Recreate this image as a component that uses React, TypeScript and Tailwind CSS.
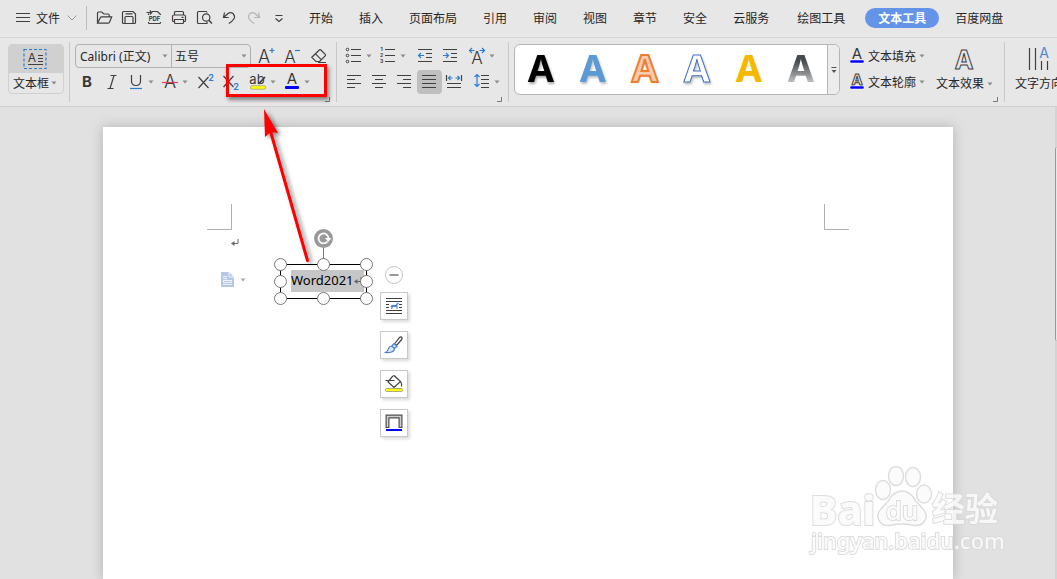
import { useState } from "react";
import type { ReactNode } from "react";

const UI = "font-['Noto_Sans','Noto_Sans_CJK_SC',sans-serif]";
const BLUE = "#2b7cd3";

function Icon({ children, w = 20, h = 20 }: { children: ReactNode; w?: number; h?: number }) {
  return (
    <svg
      width={w}
      height={h}
      viewBox={`0 0 ${w} ${h}`}
      fill="none"
      stroke="#404040"
      strokeWidth="1.2"
      className="shrink-0 overflow-visible"
      aria-hidden="true"
    >
      {children}
    </svg>
  );
}

function Letter({
  x,
  y,
  size = 18,
  weight = 300,
  children,
  fill = "#383838",
  outline = false,
}: {
  x: number;
  y: number;
  size?: number;
  weight?: number;
  children: string;
  fill?: string;
  outline?: boolean;
}) {
  return (
    <text
      x={x}
      y={y}
      fontSize={size}
      fontWeight={weight}
      fontFamily="Inter, Noto Sans, sans-serif"
      textAnchor="middle"
      fill={outline ? "none" : fill}
      stroke={outline ? "#404040" : "none"}
      strokeWidth="1"
    >
      {children}
    </text>
  );
}

function Caret({ light = false }: { light?: boolean }) {
  return (
    <svg width="6" height="4" viewBox="0 0 6 4" className="shrink-0" aria-hidden="true">
      <path d="M0.5 0.5h5L3 3.500z" fill={light ? "#aaa" : "#8a8a8a"} />
    </svg>
  );
}

function Tool({ label, active, children }: { label: string; active?: boolean; children: ReactNode }) {
  return (
    <button
      type="button"
      aria-label={label}
      className={`flex h-6 w-[25px] shrink-0 items-center rounded pl-0.5 ${active ? "bg-[#bfbfbf]" : ""}`}
    >
      <Icon>{children}</Icon>
    </button>
  );
}

function DropTool({ label, children }: { label: string; children: ReactNode }) {
  return (
    <button type="button" aria-label={label} className="flex h-6 w-[34px] shrink-0 items-center gap-0.5 pl-px">
      <Icon>{children}</Icon>
      <Caret />
    </button>
  );
}

function Divider() {
  return <div className="my-1 w-px shrink-0 bg-[#c8c8c8]" />;
}

function Launcher() {
  return (
    <button type="button" aria-label="更多设置" className="absolute right-1.5 bottom-1">
      <svg width="5" height="5" viewBox="0 0 5 5" aria-hidden="true">
        <path d="M4.500 0v4.500H0" fill="none" stroke="#777" />
      </svg>
    </button>
  );
}

const mainTabs = ["开始", "插入", "页面布局", "引用", "审阅", "视图", "章节", "安全", "云服务"];

function TopBar() {
  const [tab, setTab] = useState("文本工具");
  const cls = (t: string) =>
    `h-5 shrink-0 rounded-full px-[13px] pt-0.5 whitespace-nowrap ${t === tab ? "bg-[#6394e8] font-bold text-white" : ""}`;
  const render = (t: string) => (
    <button key={t} type="button" onClick={() => setTab(t)} className={cls(t)}>
      {t}
    </button>
  );
  return (
    <header className="flex h-[38px] items-start overflow-hidden border-b border-[#d4d4d4] text-xs text-[#262626]">
      <button type="button" className="flex h-9 w-[86px] shrink-0 items-center pl-[13px]">
        <Icon>
          <path d="M3 5.500h14M3 9.500h14M3 13.500h14" />
        </Icon>
        <span className="ml-[3px] shrink-0 pt-0.5">文件</span>
        <svg width="10" height="6" viewBox="0 0 10 6" className="ml-[7px]" fill="none" stroke="#999" aria-hidden="true">
          <path d="M0.500 0.500L5 5l4.500-4.500" />
        </svg>
      </button>
      <div className="mt-1.5 h-6 w-px shrink-0 bg-[#bdbdbd]" />
      <div className="ml-[5px] flex h-9 items-center">
        <Tool label="打开">
          <path d="M3.500 15V5q0-1 1-1h3.300l2 2H14q1.200 0 1.200 1.200V9M3.500 15.200l2.800-5.400q.4-.9 1.300-.9h10.100l-2.300 5.500q-.4.8-1.300.8z" />
        </Tool>
        <Tool label="保存">
          <path d="M4.500 3.500h9.500l2.500 2.500v8.500q0 1-1 1h-11q-1 0-1-1v-10q0-1 1-1zM6 15.500V9.500q0-1 1-1h6q1 0 1 1v6M6.500 5.800h7" />
        </Tool>
        <Tool label="输出为PDF">
          <path d="M4.500 7V5.500M8 3.500h5.500l3 3V7M4.500 14v.5q0 1 1 1h10q1 0 1-1V14M2.500 4.500h5M5.800 2.500l2 2-2 2" />
          <Letter x={10.5} y={13} size={6} weight={700}>
            PDF
          </Letter>
        </Tool>
        <Tool label="打印">
          <path d="M5.500 7V4.500q0-1 1-1h7q1 0 1 1V7M5.500 13.500h-1q-1 0-1-1v-4q0-1.500 1.500-1.500h10q1.500 0 1.500 1.500v4q0 1-1 1h-1M5.500 11.500h9v3q0 1-1 1h-7q-1 0-1-1zM12.500 9.300h2" />
        </Tool>
        <Tool label="打印预览">
          <path d="M10 15.500H4.500q-1 0-1-1v-10q0-1 1-1H12q1 0 1 1M13 14v1.500h-3" />
          <circle cx="12.200" cy="9.500" r="3.700" />
          <path d="M14.900 12.200l3 3.300" strokeWidth="1.500" />
        </Tool>
        <Tool label="撤销">
          <path d="M5.500 4.500l-1 5h5.200M4.800 9.300L9 5.500q2.800-2 5.300.3 2.200 2.700.5 5.200-1.500 2.500-5 4.500" />
        </Tool>
        <Tool label="恢复">
          <path
            stroke="#b5b5b5"
            d="M14.500 4.500l1 5h-5.200M15.200 9.300L11 5.500q-2.800-2-5.300.3-2.200 2.700-.5 5.200 1.500 2.500 5 4.500"
          />
        </Tool>
        <Tool label="自定义快速访问工具栏">
          <path d="M6.500 7.500h7M6.500 10.500l3.500 3 3.500-3" />
        </Tool>
      </div>
      <nav className="ml-1 flex h-9 items-center">
        {mainTabs.map(render)}
        <div className="ml-0.5 flex gap-[7px]">
          {render("绘图工具")}
          {render("文本工具")}
        </div>
        <div className="ml-[3px] flex">{render("百度网盘")}</div>
      </nav>
    </header>
  );
}

function Combo({ label, value, options, className }: { label: string; value: string; options: string[]; className: string }) {
  return (
    <label className={`flex items-center pr-[3px] ${className}`}>
      <span className="sr-only">{label}</span>
      <select
        defaultValue={value}
        className="h-full min-w-0 flex-1 appearance-none bg-transparent pt-0.5 leading-5 outline-none"
      >
        {options.map((o) => (
          <option key={o}>{o}</option>
        ))}
      </select>
      <Caret />
    </label>
  );
}

const presets = [
  { name: "黑色", cls: "text-black drop-shadow-[1px_2px_1px_rgba(0,0,0,0.35)]" },
  { name: "蓝色", cls: "text-[#5b9bd5] drop-shadow-[1px_2px_1px_rgba(0,0,0,0.25)]" },
  { name: "橙色", cls: "text-[#f8cbad] [-webkit-text-stroke:2px_#ed7d31]" },
  { name: "蓝色轮廓", cls: "text-white [-webkit-text-stroke:1px_#4472c4] drop-shadow-[1px_2px_1px_rgba(0,0,0,0.25)]" },
  { name: "金色", cls: "text-[#f5b800]" },
  { name: "灰色渐变", cls: "bg-linear-to-b from-[#45484c] from-35% to-[#b8babd] to-80% bg-clip-text text-transparent" },
];

const alignLines = {
  left: "M3 3.500h14M3 7.500h8M3 11.500h14M3 15.500h8",
  center: "M3 3.500h14M6 7.500h8M3 11.500h14M6 15.500h8",
  right: "M3 3.500h14M9 7.500h8M3 11.500h14M9 15.500h8",
  justify: "M3 3.500h14M3 7.500h14M3 11.500h14M3 15.500h14",
};

function Ribbon() {
  return (
    <section className="flex h-[69px] overflow-hidden border-b border-[#d0d0d0] text-xs text-[#262626]">
      <div className="flex shrink-0 items-start pt-1.5 pr-[5px] pl-2">
        <button type="button" className="w-14 overflow-hidden rounded border border-[#d0d0d0]">
          <span className="flex h-7 items-center justify-center bg-[#d0d0d0] pr-0.5">
            <Icon w={24} h={20}>
              <rect x="1" y="0.500" width="22" height="19" stroke={BLUE} strokeDasharray="3 2" />
              <Letter x={9} y={13} size={12} weight={400}>
                A
              </Letter>
              <path d="M15 6.500h5M15 9.500h5M15 12.500h5M5 15.500h15" strokeWidth="1" />
            </Icon>
          </span>
          <span className="flex h-5 items-center gap-0.5 pl-1">
            <span className="pt-0.5 whitespace-nowrap">文本框</span>
            <Caret />
          </span>
        </button>
      </div>
      <Divider />
      <div className="relative flex w-[266px] shrink-0 flex-col gap-0.5 pt-1.5 pl-[5px]">
        <div className="flex h-6 items-center">
          <div className="flex h-6 w-44 rounded border border-[#b0b0b0]">
            <Combo
              label="字体"
              value="Calibri (正文)"
              options={["Calibri (正文)", "宋体", "黑体"]}
              className="w-[96px] border-r border-[#b0b0b0] pl-1"
            />
            <Combo label="字号" value="五号" options={["五号", "四号", "小四"]} className="flex-1 pl-[3px]" />
          </div>
          <div className="ml-px flex gap-0.5">
            <Tool label="增大字号">
              <Letter x={10} y={17} size={18}>A</Letter>
              <path d="M15.500 4.500h5M18 2v5" stroke={BLUE} />
            </Tool>
            <Tool label="减小字号">
              <Letter x={9} y={17} size={17}>A</Letter>
              <path d="M14 4.500h5" stroke={BLUE} />
            </Tool>
            <Tool label="清除格式">
              <path d="M3.800 11.300l7.500-7.300q.8-.7 1.600 0l4.300 4.300q.8.8 0 1.600L11.500 15.500q-.7.8-1.500 0H8zM7.500 7.800l6 6M10 16.500h8" />
            </Tool>
          </div>
        </div>
        <div className="flex h-6">
          <Tool label="加粗">
            <Letter x={10} y={15} size={15} weight={700}>B</Letter>
          </Tool>
          <Tool label="倾斜">
            <path d="M8.500 3.500h6M5.500 16.500h6M12 3.500l-4 13" />
          </Tool>
          <DropTool label="下划线">
            <path d="M5.500 3v6q0 4.500 4.500 4.500t4.500-4.500V3" />
            <path d="M4 16.500h12" stroke={BLUE} />
          </DropTool>
          <DropTool label="删除线">
            <Letter x={10} y={16} size={18}>A</Letter>
            <path d="M2 10.500h16" stroke="#e04050" />
          </DropTool>
          <Tool label="上标">
            <path d="M3.500 5l10 11M13.500 5l-10 11" />
            <Letter x={16} y={9} size={9} weight={600} fill={BLUE}>2</Letter>
          </Tool>
          <Tool label="下标">
            <path d="M3.500 4l10 11M13.500 4l-10 11" />
            <Letter x={16} y={18} size={9} weight={600} fill={BLUE}>2</Letter>
          </Tool>
          <div className="ml-1 flex">
            <DropTool label="突出显示">
              <Letter x={9} y={12} size={13} weight={400}>ab</Letter>
              <path d="M10.500 12l6.500-7" strokeWidth="1.800" />
              <rect x="2.500" y="13.700" width="15" height="3.500" rx="1.500" fill="#ffff00" stroke="#777" strokeWidth=".5" />
            </DropTool>
            <DropTool label="字体颜色">
              <Letter x={10} y={12} size={15} weight={400}>A</Letter>
              <rect x="3" y="14" width="14" height="3" rx="1" fill="#0000ff" stroke="none" />
            </DropTool>
          </div>
        </div>
        <Launcher />
      </div>
      <Divider />
      <div className="relative flex w-[171px] shrink-0 flex-col gap-0.5 pt-1.5 pl-[5px]">
        <div className="flex h-6 pl-px">
          <DropTool label="项目符号">
            <g strokeWidth="1">
              <circle cx="3.500" cy="3.500" r="1.300" />
              <circle cx="3.500" cy="9.500" r="1.300" />
              <circle cx="3.500" cy="15.500" r="1.300" />
            </g>
            <path d="M7 3.500h10M7 9.500h10M7 15.500h10" />
          </DropTool>
          <DropTool label="编号">
            <Letter x={3.5} y={5} size={5} weight={700}>1</Letter>
            <Letter x={3.5} y={11} size={5} weight={700}>2</Letter>
            <Letter x={3.5} y={17} size={5} weight={700}>3</Letter>
            <path d="M7 3.500h10M7 9.500h10M7 15.500h10" />
          </DropTool>
          <div className="ml-0.5 flex">
            <Tool label="减少缩进">
              <path d="M3 3.500h14M11 7.500h6M11 11.500h6M3 15.500h14" />
              <path d="M9 9.500H3.500M6 7L3.500 9.500 6 12" stroke={BLUE} />
            </Tool>
            <Tool label="增加缩进">
              <path d="M3 3.500h14M11 7.500h6M11 11.500h6M3 15.500h14" />
              <path d="M3 9.500h5.500M6 7l2.500 2.500L6 12" stroke={BLUE} />
            </Tool>
          </div>
          <div className="ml-[3px] flex">
            <DropTool label="字符缩放">
              <Letter x={10} y={18} size={17}>A</Letter>
              <path d="M2.500 4.500h5M5 2L2.500 4.500 5 7M12.500 4.500h5M15 2l2.500 2.500L15 7" stroke={BLUE} />
            </DropTool>
          </div>
        </div>
        <div className="flex h-6">
          <Tool label="左对齐"><path d={alignLines.left} /></Tool>
          <Tool label="居中对齐"><path d={alignLines.center} /></Tool>
          <Tool label="右对齐"><path d={alignLines.right} /></Tool>
          <Tool label="两端对齐" active><path d={alignLines.justify} /></Tool>
          <Tool label="分散对齐">
            <path d="M2.500 3v6M17.500 3v6M3 11.500h14M3 15.500h14" />
            <path d="M4.500 6h4M6.500 4l-2 2 2 2M11.500 6h4M13.500 4l2 2-2 2" stroke={BLUE} />
          </Tool>
          <div className="ml-1 flex">
            <DropTool label="行距">
              <path d="M9 3.500h8M9 7.500h8M9 11.500h8M9 15.500h8" />
              <path d="M5 3v11M2.500 5L5 2.500 7.500 5M2.500 12L5 14.500 7.500 12" stroke={BLUE} />
            </DropTool>
          </div>
        </div>
        <Launcher />
      </div>
      <Divider />
      <div className="relative flex w-[495px] shrink-0 items-start pt-1.5 pl-[5px]">
        <div className="flex h-[51px] shrink-0 rounded-md border border-[#b4b4b4] bg-white">
          {presets.map((p) => (
            <button
              key={p.name}
              type="button"
              aria-label={p.name}
              className="flex w-[52px] items-center justify-center pb-1 text-[38px] leading-[45px] font-bold"
            >
              <span className={p.cls}>A</span>
            </button>
          ))}
          <button
            type="button"
            aria-label="更多样式"
            className="flex w-3 items-center justify-center rounded-r-md border-l border-[#b4b4b4] bg-[#ececec]"
          >
            <svg width="6" height="6" viewBox="0 0 6 6" aria-hidden="true">
              <path d="M0.500 0h5v1h-5zM0.500 3h5L3 6z" fill="#555" />
            </svg>
          </button>
        </div>
        <div className="ml-[7px] flex shrink-0 flex-col gap-0.5">
          <button type="button" className="flex h-6 items-center">
            <Icon>
              <Letter x={10} y={13} size={15} weight={400}>A</Letter>
              <rect x="3" y="14" width="14" height="3" rx="1" fill="#0000ff" stroke="#fff" strokeWidth=".5" />
            </Icon>
            <span className="mr-[3px] ml-px pt-0.5">文本填充</span>
            <Caret />
          </button>
          <button type="button" className="flex h-6 items-center">
            <Icon>
              <Letter x={10} y={13} size={15} weight={700} outline>A</Letter>
              <rect x="3" y="14" width="14" height="3" rx="1" fill="#0000ff" stroke="#fff" strokeWidth=".5" />
            </Icon>
            <span className="mr-[3px] ml-px pt-0.5">文本轮廓</span>
            <Caret />
          </button>
        </div>
        <button type="button" className="ml-[11px] flex shrink-0 flex-col">
          <span className="flex h-[30px] w-14 items-center justify-center">
            <Icon w={22} h={22}>
              <Letter x={11} y={21} size={25} weight={700} outline>A</Letter>
            </Icon>
          </span>
          <span className="flex h-5 items-center gap-[3px]">
            文本效果
            <Caret />
          </span>
        </button>
        <Launcher />
      </div>
      <Divider />
      <button type="button" className="ml-2.5 flex shrink-0 flex-col items-start pt-1.5">
        <span className="flex h-[30px] items-center pl-3">
          <Icon w={22} h={24}>
            <path d="M2.500 1v22M8.500 1v22M14.500 14v9M20.500 14v9" />
            <Letter x={17} y={11} size={14} fill="#4a86dc" weight={400}>A</Letter>
          </Icon>
        </span>
        <span className="flex h-5 items-center gap-[3px] whitespace-nowrap">
          文字方向
          <Caret />
        </span>
      </button>
    </section>
  );
}

function FloatButton({ label, children }: { label: string; children: ReactNode }) {
  return (
    <button
      type="button"
      aria-label={label}
      className="flex size-7 items-center justify-center border border-[#c8c8c8] bg-white shadow-[2px_2px_3px_rgba(0,0,0,0.15)]"
    >
      <Icon>{children}</Icon>
    </button>
  );
}

function ReturnMark() {
  return (
    <svg width="8" height="8" viewBox="0 0 8 8" fill="none" stroke="#666" className="shrink-0" aria-hidden="true">
      <path d="M7 0v4.500H2" />
      <path d="M0 4.500L3.500 2v5z" fill="#666" stroke="none" />
    </svg>
  );
}

const handles = [
  "left-0 top-0",
  "left-[43px] top-0",
  "left-[86px] top-0",
  "left-0 top-[17px]",
  "left-[86px] top-[17px]",
  "left-0 top-[34px]",
  "left-[43px] top-[34px]",
  "left-[86px] top-[34px]",
];

function TextBox() {
  return (
    <div className="absolute top-[131px] left-[171px] h-[47px] w-[99px]">
      <div className="absolute top-1.5 left-1.5 flex h-[35px] w-[87px] items-start border border-black pt-[5px] pl-2.5">
        <span className="flex h-[22px] w-[73px] items-center bg-[#c6c6c6] text-[13px] text-black">
          Word2021
          <ReturnMark />
        </span>
      </div>
      <div className="absolute -top-3.5 left-[49px] h-5 w-px bg-[#777]" />
      {handles.map((h) => (
        <span key={h} className={`absolute size-[13px] rounded-full border border-[#777] bg-white ${h}`} />
      ))}
      <button type="button" aria-label="旋转" className="absolute -top-[29px] left-10">
        <Icon>
          <circle cx="9.500" cy="9.500" r="9.500" fill="#999" stroke="none" />
          <path d="M13.500 12.500A5 5 0 1 1 14.500 9" stroke="#fff" strokeWidth="1.800" />
          <path d="M11 9h6.500l-3.200 4z" fill="#fff" stroke="none" />
        </Icon>
      </button>
    </div>
  );
}

function DocumentPage() {
  return (
    <article className="relative mt-5 mr-[102px] ml-[103px] flex-1 bg-white shadow-[0_0_12px_rgba(0,0,0,0.22)]">
      <span className="absolute top-[77px] left-[104px] h-[26px] w-[25px] border-r border-b border-[#b0b0b0]" />
      <span className="absolute top-[77px] right-[104px] h-[26px] w-[25px] border-b border-l border-[#b0b0b0]" />
      <span className="absolute top-28 left-32">
        <ReturnMark />
      </span>
      <button type="button" aria-label="段落布局" className="absolute top-[145px] left-[118px] flex items-center gap-1.5">
        <svg width="13" height="15" viewBox="0 0 13 15" aria-hidden="true">
          <path d="M0 0h8l5 5v10H0z" fill="#b4c7e7" />
          <path d="M8 0v5h5M2 4.500h4M2 6.500h4M2 12.500h9M2.500 8.500h8v2h-8z" stroke="#fff" strokeWidth=".8" fill="none" />
        </svg>
        <Caret light />
      </button>
      <TextBox />
      <div className="absolute top-[139px] left-[277px] flex flex-col items-center">
        <button type="button" aria-label="收起" className="mb-2">
          <svg width="18" height="18" viewBox="0 0 18 18" className="block" aria-hidden="true">
            <circle cx="9" cy="9" r="8.500" fill="#fff" stroke="#c4c4c4" />
            <path d="M4.500 9h9" stroke="#999" strokeWidth="2" />
          </svg>
        </button>
        <div className="flex flex-col gap-[11px]">
          <FloatButton label="布局选项">
            <path d="M2 2.500h16M2 5.500h16M2 8.500h3M15 8.500h3M2 11.500h3M15 11.500h3M2 14.500h16M2 17.500h16" />
            <path d="M6.500 11l1-2h4l2-2.500 1.500 1-1.500 1v4.500h-1V11H9l-1 2H7l.5-2z" fill="#4a86dc" stroke="none" />
          </FloatButton>
          <FloatButton label="形状样式">
            <path d="M10.500 9l5-6.500q1.200-1.200 2.300-.3.900 1-.2 2.300l-5 6z" />
            <path
              d="M1.500 17.500q2.500-1.500 3-4 1-2.500 3.200-2.500l2.800 2.500q0 2.500-3 3.500-3 1-6 .5zM10 8.500l3 2.800-2.500 2.200-2.800-2.500z"
              stroke="#4a7fd0"
              fill="#dbe8fa"
            />
          </FloatButton>
          <FloatButton label="形状填充">
            <path d="M1.500 6.500h9M10 1.500l6.500 6-6.500 6-6-5.500 4.500-5.500q1-1.500 2.500 0M16.500 7.500q1.500 2 1 5" />
            <rect x="1.500" y="14.500" width="17" height="3" rx="1" fill="#ffff00" stroke="#888" strokeWidth=".7" />
          </FloatButton>
          <FloatButton label="形状轮廓">
            <path d="M3.500 15V3.500h13V15" stroke="#505050" strokeWidth="4" />
            <path d="M3.500 14V3.500h13V14" stroke="#d0d0d0" strokeWidth="1.600" />
            <path d="M2 17h16" stroke="#0000ff" strokeWidth="2" />
          </FloatButton>
        </div>
      </div>
    </article>
  );
}

function Annotation() {
  return (
    <>
      <div className="pointer-events-none absolute top-16 left-[226px] h-[33px] w-[101px] border-[3px] border-[#fd0000] shadow-[2px_3px_4px_rgba(0,0,0,0.45)]" />
      <svg
        width="60"
        height="160"
        viewBox="0 0 60 160"
        className="pointer-events-none absolute top-[106px] left-[256px] overflow-visible drop-shadow-[3px_2px_2px_rgba(0,0,0,0.45)]"
        aria-hidden="true"
      >
        <path d="M51.500 154.500L15 27" stroke="#fd0000" strokeWidth="3" strokeLinecap="round" />
        <path d="M8 3l14 24-7-1-6 5z" fill="#fd0000" />
      </svg>
    </>
  );
}

function Watermark() {
  return (
    <svg
      width="196"
      height="92"
      viewBox="0 0 196 92"
      className="pointer-events-none absolute right-[55px] bottom-[22px] overflow-visible opacity-85"
      fill="#fbfbfb"
      stroke="#d8d8d8"
      strokeWidth="2"
      fontFamily="Noto Sans, Noto Sans CJK SC, sans-serif"
      aria-hidden="true"
    >
      <text x="4" y="60" fontSize="41" fontWeight="800" paintOrder="stroke">Bai</text>
      <g strokeWidth="1.500">
        <ellipse cx="77" cy="25" rx="7.500" ry="9.500" />
        <ellipse cx="90" cy="11" rx="7.500" ry="9.500" />
        <ellipse cx="107" cy="12" rx="7.500" ry="9.500" />
        <ellipse cx="118" cy="29" rx="7.500" ry="9" />
        <path d="M96 26q8 0 13 9l8 9q6 7 1 13-4 5-12 3-10-2-20 0-8 2-12-3-5-7 1-13l8-9q5-9 13-9z" />
      </g>
      <text x="96" y="55" fontSize="26" textAnchor="middle" fontWeight="500" paintOrder="stroke">du</text>
      <text x="126" y="56" fontSize="33" fontWeight="700" paintOrder="stroke">经验</text>
      <text x="5" y="84" fontSize="22" fontWeight="500" paintOrder="stroke">jingyan.baidu.com</text>
    </svg>
  );
}

export default function App() {
  return (
    <div className={`relative flex min-h-screen flex-col overflow-hidden bg-[#e7e7e7] ${UI}`}>
      <TopBar />
      <Ribbon />
      <main className="flex flex-1 overflow-hidden bg-[#e1e1e1]">
        <DocumentPage />
        <div className="w-0.5 bg-[#d4d4d4] pt-10">
          <div className="h-[194px] rounded-l border-l border-[#999] bg-[#e8e8e8]" />
        </div>
      </main>
      <Annotation />
      <Watermark />
    </div>
  );
}
